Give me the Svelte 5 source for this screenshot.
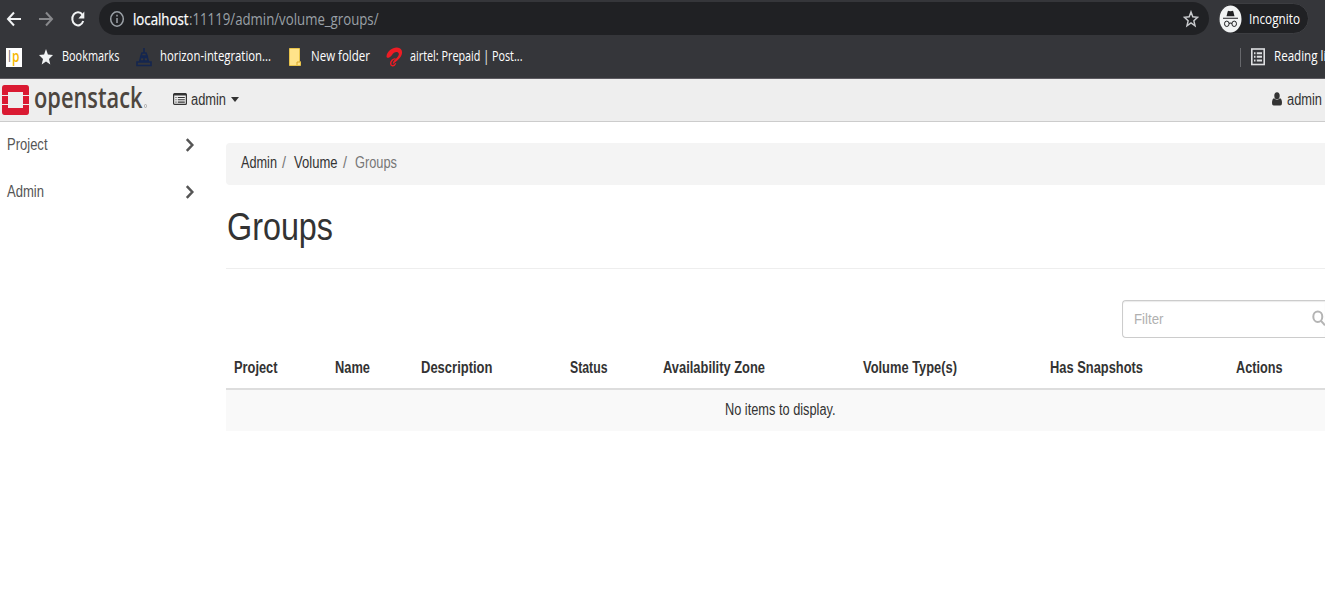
<script lang="ts">
  const columns = [
    { name: "Project", width: 43.5 },
    { name: "Name", width: 35 },
    { name: "Description", width: 71.5 },
    { name: "Status", width: 37.5 },
    { name: "Availability Zone", width: 102 },
    { name: "Volume Type(s)", width: 94 },
    { name: "Has Snapshots", width: 93 },
    { name: "Actions", width: 46.5 },
  ];

  const panels = [
    { name: "Project", width: 40.5 },
    { name: "Admin", width: 37 },
  ];
</script>

<!-- One line of condensed text, the box is centered on the capitals -->
{#snippet label(text: string, width: number, size: number = 15.8, kind: string = "")}
  <svg class="label {kind}" {width} height={size * 1.28}>
    <text y={size - 0.8} font-size={size} textLength={width} lengthAdjust="spacingAndGlyphs">{text}</text>
  </svg>
{/snippet}

<div class="window">
  <header class="browser">
    <div class="toolbar">
      <svg class="back" width="16" height="18" viewBox="0 0 16 18">
        <path d="M15 9H2M8 2.5L2 9l6 6.5" />
      </svg>
      <svg class="forward" width="16" height="18" viewBox="0 0 16 18">
        <path d="M1 9h13M8 2.5L14 9l-6 6.5" />
      </svg>
      <svg class="reload" width="16" height="18" viewBox="0 0 16 18">
        <path d="M12.4 4.8A5.6 6.6 0 1 0 13.2 11" />
        <path class="tip" d="M14.3 1.5v7H8.4z" />
      </svg>

      <div class="omnibox">
        <svg class="info" width="16" height="18" viewBox="0 0 16 18">
          <ellipse cx="8" cy="9" rx="6.3" ry="7.2" />
          <path d="M8 8v5M8 4.8v1.8" />
        </svg>
        <div class="url">
          {@render label("localhost", 55.5, 15.6, "ui host")}
          {@render label(":11119/admin/volume_groups/", 189.5, 15.6, "ui path")}
        </div>
        <svg class="favourite" width="16" height="18" viewBox="0 0 16 18">
          <path d="M8 2l1.8 4.8 4.7.5-3.6 3.5 1.1 5L8 13l-4 2.8 1.1-5-3.6-3.5 4.7-.5z" />
        </svg>
      </div>

      <div class="profile">
        <svg width="23" height="28" viewBox="0 0 23 28">
          <ellipse cx="11.5" cy="14" rx="11" ry="13.5" fill="#f1f3f4" />
          <path d="M7.5 11.2l1.2-4.6q.3-1 1.3-.7l1.5.4 1.5-.4q1-.3 1.3.7l1.2 4.6z" fill="#202124" />
          <path d="M4 13.2h15M10 18.5q1.5-1 3 0" stroke="#202124" stroke-width="1.1" fill="none" />
          <ellipse cx="7.8" cy="18.8" rx="2.3" ry="2.7" stroke="#202124" fill="none" />
          <ellipse cx="15.2" cy="18.8" rx="2.3" ry="2.7" stroke="#202124" fill="none" />
        </svg>
        {@render label("Incognito", 51, 13.8, "ui")}
      </div>
    </div>

    <div class="bookmarks">
      <div class="favicon">
        {@render label("l", 3, 16, "ui grey")}
        {@render label("p", 7.5, 16, "ui gold")}
      </div>
      <svg class="star" width="16" height="18" viewBox="0 0 16 18">
        <path d="M8 1l1.9 5.6 5.1.5-4 3.9 1.3 5.6L8 13.6l-4.3 3L5 11 1 7.1l5.1-.5z" fill="#f1f3f4" />
      </svg>
      {@render label("Bookmarks", 57.5, 13.8, "ui")}
      <svg class="tower" width="16" height="20" viewBox="0 0 16 20">
        <path
          d="M8 1v5M6 6h4l1 3H5zM4.5 10.5h7M5 9l-1.5 6M11 9l1.5 6M8 9v6M3 14h10M1 15h14v3.5H1z"
          fill="none"
          stroke="#14264f"
          stroke-width="1.6"
        />
      </svg>
      {@render label("horizon-integration...", 111, 13.8, "ui")}
      <svg class="folder" width="12" height="18" viewBox="0 0 12 18">
        <path d="M.5.5h10v13.2h1v3.8H.5z" fill="#ffe38a" stroke="#e8c34a" />
        <path d="M8 17v-3h3" fill="none" stroke="#d9a82b" />
      </svg>
      {@render label("New folder", 59, 13.8, "ui")}
      <svg class="airtel" width="17" height="20" viewBox="0 0 17 20">
        <path
          d="M.5 9.2C1.2 4 6.5.4 11 .6c5 .3 6.3 4.6 4 8.6-1.8 3-4.5 4.7-6.5 6.6-.7.9-1.3 1.2-1.8.8.2-2.3 2.3-3.8 4-5.5 2-2 3-4.6 1.3-5.7C10 4.3 7.5 5.5 6 8c-1.5 2.2-3.5 3.2-4.7 2.7-.6-.3-.9-.8-.8-1.5z"
          fill="#ed1c24"
        />
        <path d="M9.5 12c-2.5-.6-5 2.5-4.8 5 .3 2.5 3.8 2.3 5-.8" fill="none" stroke="#ed1c24" stroke-width="1.4" />
      </svg>
      {@render label("airtel: Prepaid | Post...", 112.5, 13.8, "ui")}

      <div class="reading">
        <svg width="14" height="18" viewBox="0 0 14 18">
          <rect x=".8" y="1" width="12.4" height="15.5" fill="none" stroke="#dddee0" stroke-width="1.6" />
          <path d="M3 5.2h1.5M3 8.8h1.5M3 12.4h1.5M5.8 5.2H11M5.8 8.8H11M5.8 12.4H11" stroke="#dddee0" stroke-width="2" />
        </svg>
        {@render label("Reading list", 62, 13.8, "ui")}
      </div>
    </div>
  </header>

  <nav class="topbar">
    <svg class="mark" width="27" height="30" viewBox="0 0 27 30">
      <g fill="#da1a32">
        <path d="M2.5 0h22Q27 0 27 3v7h-6V7H6v3H0V3q0-3 2.5-3z" />
        <path d="M0 11h6v8H0zM21 11h6v8h-6z" />
        <path d="M0 20h6v3h15v-3h6v7q0 3-2.5 3h-22Q0 30 0 27z" />
      </g>
    </svg>
    {@render label("openstack", 108.5, 28, "ui brand")}
    <span class="registered"></span>

    <div class="project-switch">
      <svg width="14" height="12" viewBox="0 0 14 12">
        <rect x=".6" y=".6" width="12.8" height="10.8" rx="1" fill="none" stroke="#333" stroke-width="1.2" />
        <path d="M1 1.5h12" stroke="#333" stroke-width="2" />
        <path d="M2.5 4.5h1M2.5 6.8h1M2.5 9.1h1M4.8 4.5h7M4.8 6.8h7M4.8 9.1h7" stroke="#333" stroke-width="1.1" />
      </svg>
      {@render label("admin", 35, 15.8)}
      <span class="caret"></span>
    </div>

    <div class="user">
      <svg width="10" height="14" viewBox="0 0 10 14">
        <ellipse cx="5" cy="3.7" rx="2.7" ry="3.5" fill="#333" />
        <path d="M2 6.3Q5 9 8 6.3q2 .7 2 4.7 0 2.5-1.7 2.5H1.7Q0 13.5 0 11 0 7 2 6.3z" fill="#333" />
      </svg>
      {@render label("admin", 35, 15.8)}
    </div>
  </nav>

  <div class="page">
    <aside class="sidebar">
      {#each panels as panel}
        <div class="panel">
          {@render label(panel.name, panel.width)}
          <svg width="10" height="14" viewBox="0 0 10 14">
            <path d="M1.8 1.2L7.3 7l-5.5 5.8" fill="none" stroke="#555" stroke-width="2.5" />
          </svg>
        </div>
      {/each}
    </aside>

    <main class="content">
      <div class="breadcrumb">
        {@render label("Admin", 36)}
        {@render label("/", 4, 15.8, "muted")}
        {@render label("Volume", 43.5)}
        {@render label("/", 4, 15.8, "muted")}
        {@render label("Groups", 42, 15.8, "muted")}
      </div>

      <div class="title">
        {@render label("Groups", 106, 39.5)}
      </div>

      <div class="actions">
        <div class="filter">
          {@render label("Filter", 29.5, 15.2)}
          <svg class="search" width="14" height="17" viewBox="0 0 14 17">
            <ellipse cx="5.8" cy="6.7" rx="4.5" ry="5.2" />
            <path d="M9 10.8l4 4.5" />
          </svg>
        </div>
      </div>

      <div class="row head">
        {#each columns as column}
          {@render label(column.name, column.width, 15.8, "strong")}
        {/each}
      </div>
      <div class="empty">
        {@render label("No items to display.", 110.5)}
      </div>
    </main>
  </div>
</div>

<style>
  :global(body) {
    background: #fff;
    overflow: hidden;
  }

  .window {
    width: 1325px;
    height: 610px;
    overflow: hidden;
    color: #333;
    font-family: "Liberation Sans", Arial, sans-serif;
  }

  svg {
    display: block;
    flex: none;
  }

  .label {
    overflow: visible;
    fill: currentColor;
  }

  .ui {
    font-family: "Open Sans", "Noto Sans", sans-serif;
  }

  .strong {
    font-weight: bold;
  }

  .muted {
    color: #777;
  }

  /* Browser */
  .browser {
    box-sizing: border-box;
    height: 79px;
    background: #35363a;
    border-bottom: 1px solid #5c5a60;
    color: #fff;
  }

  .toolbar {
    display: flex;
    align-items: center;
    height: 37px;
    padding-left: 6px;
  }

  .toolbar > svg {
    fill: none;
    stroke: #f1f3f4;
    stroke-width: 2;
    margin-right: 16px;
  }

  .toolbar > .forward {
    stroke: #88898c;
  }

  .toolbar > .reload {
    margin-right: 13px;
  }

  .reload .tip {
    fill: #f1f3f4;
    stroke: none;
  }

  .omnibox {
    display: flex;
    align-items: center;
    box-sizing: border-box;
    width: 1110px;
    height: 33px;
    padding: 0 10px;
    border-radius: 17px;
    background: #202124;
  }

  .info,
  .favourite {
    fill: none;
    stroke: #9aa0a6;
    stroke-width: 1.5;
  }

  .favourite {
    stroke: #c8cacd;
    margin-left: auto;
  }

  .url {
    display: flex;
    padding: 2px 0 0 8px;
  }

  .host {
    stroke: #fff;
    stroke-width: 0.25;
  }

  .path {
    color: #9aa0a6;
  }

  .profile {
    display: flex;
    align-items: center;
    gap: 7px;
    box-sizing: border-box;
    width: 91px;
    height: 31px;
    margin-left: 9px;
    border: 1px solid #3c3d41;
    border-radius: 16px;
    background: #202124;
  }

  .profile .label {
    margin-top: 2px;
  }

  .bookmarks {
    display: flex;
    align-items: center;
    height: 40px;
    padding-left: 6px;
  }

  .favicon {
    display: flex;
    align-items: center;
    justify-content: center;
    gap: 1px;
    width: 16px;
    height: 19px;
    background: #fff;
  }

  .grey {
    color: #777;
  }

  .gold {
    color: #f5b800;
    font-weight: 600;
  }

  .star {
    margin: 0 8px 0 16px;
  }

  .tower {
    margin: 0 8px 0 16.5px;
  }

  .folder {
    margin: 0 10px 0 18px;
  }

  .airtel {
    margin: 0 7px 0 16px;
  }

  .reading {
    display: flex;
    align-items: center;
    gap: 9px;
    height: 19px;
    margin-left: auto;
    margin-right: -11px;
    padding-left: 10px;
    border-left: 1px solid #67686c;
  }

  /* Dashboard */
  .topbar {
    display: flex;
    align-items: center;
    box-sizing: border-box;
    height: 43px;
    padding: 0 0 1px 2px;
    background: #eee;
    border-bottom: 1px solid #ccc;
  }

  .brand {
    margin: -1px 0 0 5px;
    color: #4d463f;
    font-weight: 600;
  }

  .registered {
    width: 1px;
    height: 2px;
    margin: 13px 0 0 1px;
    border: 1px solid #aaa;
    border-radius: 2px;
  }

  .project-switch {
    display: flex;
    align-items: center;
    margin: -1px 0 0 26px;
  }

  .project-switch .label {
    margin: 2px 5px 0 4px;
  }

  .caret {
    border: 4px solid transparent;
    border-top: 5px solid #333;
    border-bottom: 0;
  }

  .user {
    display: flex;
    align-items: center;
    gap: 5px;
    margin: -1px 3px 0 auto;
  }

  .user .label {
    margin-top: 2px;
  }

  .page {
    display: flex;
  }

  .sidebar {
    flex: none;
    width: 226px;
    color: #555;
  }

  .panel {
    display: flex;
    align-items: center;
    justify-content: space-between;
    height: 45px;
    margin-bottom: 2px;
    padding: 0 31.5px 0 7.3px;
  }

  .panel .label {
    margin-top: 1px;
  }

  .content {
    flex: 1;
    min-width: 0;
    padding-top: 21px;
  }

  .breadcrumb {
    display: flex;
    align-items: center;
    gap: 8px;
    box-sizing: border-box;
    height: 42px;
    padding: 0 15px 2px;
    border-radius: 4px 0 0 4px;
    background: #f4f4f4;
  }

  .breadcrumb .label:nth-child(even) {
    margin-left: -3px;
  }

  .title {
    display: flex;
    align-items: center;
    box-sizing: border-box;
    height: 84px;
    padding: 0 0 1px 0.8px;
    border-bottom: 1px solid #eee;
  }

  .actions {
    display: flex;
    justify-content: flex-end;
    padding: 31px 0 9px;
  }

  .filter {
    display: flex;
    align-items: center;
    justify-content: space-between;
    box-sizing: border-box;
    width: 203px;
    height: 38px;
    padding-left: 11px;
    border: 1px solid #ccc;
    border-right: 0;
    border-radius: 4px 0 0 4px;
    box-shadow: inset 0 1px 1px rgba(0, 0, 0, 0.08);
    color: #b0b0b0;
  }

  .filter .label {
    margin-top: 1px;
  }

  .search {
    fill: none;
    stroke: #b4b4b4;
    stroke-width: 2;
    margin: -1px -1px 0 0;
  }

  .row {
    display: grid;
    grid-template-columns: 101px 86px 149.3px 92.7px 200.5px 187px 185.5px 1fr;
    align-items: center;
    padding-left: 8px;
  }

  .head {
    height: 41px;
    border-bottom: 2px solid #ddd;
  }

  .head .label {
    margin-top: 1.5px;
  }

  .empty {
    display: flex;
    align-items: center;
    justify-content: center;
    box-sizing: border-box;
    height: 41px;
    padding-left: 10px;
    background: #f9f9f9;
  }
</style>
